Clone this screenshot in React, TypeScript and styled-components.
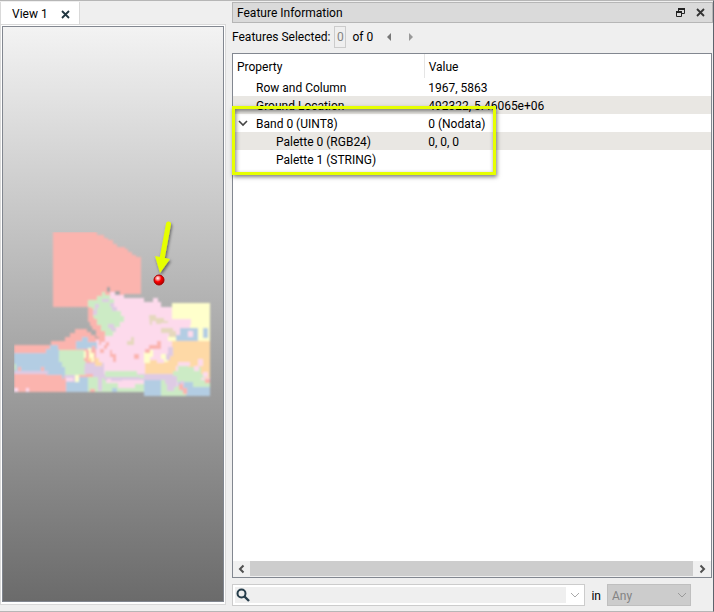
import React from "react";
import styled, { createGlobalStyle } from "styled-components";

const GlobalStyle = createGlobalStyle`
  *, *::before, *::after { box-sizing: border-box; }
  body { margin: 0; background: #efefef; }
  body, button, input, select {
    font-family: Roboto, "Open Sans", sans-serif;
    font-size: 12px;
    line-height: 18px;
    color: #000;
  }
  button { border: 0; padding: 0; background: transparent; }
`;

const Window = styled.main`
  display: grid;
  grid-template-columns: minmax(0, 226fr) minmax(0, 481fr);
  column-gap: 6px;
  height: 100vh;
  min-height: 420px;
  border-top: 1px solid #b6b6b6;
  border-bottom: 1px solid #b6b6b6;
  border-right: 1px solid #5d646d;
  background: #efefef;
`;

const ViewDock = styled.section`
  display: flex;
  flex-direction: column;
  padding: 1px 0 6px;
`;

const ViewTab = styled.div`
  display: flex;
  align-items: center;
  justify-content: space-between;
  width: 80px;
  height: 22px;
  padding: 2px 9px 0 11px;
  background: #fff;
  border-left: 1px solid #d9d9d9;
  border-right: 1px solid #d9d9d9;
`;

const IconButton = styled.button<{ $w?: number }>`
  display: flex;
  align-items: center;
  justify-content: center;
  width: ${(p) => p.$w ?? 12}px;
  height: 16px;
`;

const ViewPane = styled.div`
  display: flex;
  flex: 1;
  padding: 1px 1px 2px;
  background: #fff;
  border: 1px solid #d9d9d9;
`;

const Canvas = styled.div`
  position: relative;
  flex: 1;
  border: 1px solid #828790;
  background: linear-gradient(#f3f3f3, #6b6b6b);
  overflow: hidden;
`;

const MapLayer = styled.svg`
  position: absolute;
  left: 11px;
  top: 205px;
`;

const Marker = styled.svg`
  position: absolute;
  left: 147px;
  top: 190px;
`;

const InfoDock = styled.section`
  display: flex;
  flex-direction: column;
  min-width: 0;
  padding: 1px 0 5px;
`;

const TitleBar = styled.header`
  display: flex;
  align-items: center;
  gap: 8px;
  height: 21px;
  padding: 0 6px 0 4px;
  border: 1px solid #b6b6b6;
  background: #dadada;
`;

const Title = styled.h1`
  flex: 1;
  margin: 0;
  font-size: 12px;
  font-weight: 400;
`;

const SelectionBar = styled.div`
  display: flex;
  align-items: center;
  height: 30px;
  padding-bottom: 2px;
`;

const IndexInput = styled.input`
  width: 12px;
  height: 22px;
  margin: 0 6px 0 4px;
  padding: 0;
  border: 1px solid #ccc;
  background: #efefef;
  color: #838383;
  text-align: center;
`;

const Steppers = styled.div`
  display: flex;
  gap: 10px;
  margin-left: 10px;
`;

const TreeFrame = styled.div`
  position: relative;
  display: flex;
  flex: 1;
  flex-direction: column;
  justify-content: space-between;
  margin-right: 1px;
  border: 1px solid #828790;
  background: #fff;
`;

const Tree = styled.table`
  width: 100%;
  table-layout: fixed;
  border-collapse: collapse;
`;

const PropertyCol = styled.col`
  width: 40%;
`;

const HeadCell = styled.th`
  height: 24px;
  padding: 2px 4px 0;
  font-weight: 400;
  text-align: left;
  &:first-child { border-right: 1px solid #e5e5e5; }
`;

const Row = styled.tr<{ $shaded: boolean }>`
  background: ${(p) => (p.$shaded ? "#e9e7e3" : "#fff")};
`;

const Cell = styled.td<{ $depth?: number }>`
  height: 18px;
  padding: 2px 0 0 ${(p) => (p.$depth ? 3 + p.$depth * 20 : 4)}px;
  line-height: 16px;
  white-space: nowrap;
`;

const Expander = styled.button`
  display: inline-flex;
  align-items: center;
  width: 18px;
  height: 12px;
  margin-left: -18px;
  vertical-align: text-top;
`;

const Highlight = styled.div`
  position: absolute;
  left: -1px;
  top: 52px;
  width: 264px;
  height: 69px;
  border: 3px solid #e6ff00;
  box-shadow: 1px 2px 4px rgba(0, 0, 0, 0.5), inset 1px 2px 4px rgba(0, 0, 0, 0.5);
  pointer-events: none;
`;

const ScrollBar = styled.div`
  display: flex;
  height: 16px;
  padding-bottom: 1px;
  background: #f0f0f0;
`;

const ScrollThumb = styled.div`
  flex: 1;
  background: #cdcdcd;
`;

const FilterBar = styled.form`
  display: flex;
  align-items: center;
  gap: 6px;
  margin-top: 6px;
  padding-right: 22px;
`;

const SearchBox = styled.div`
  display: flex;
  flex: 1;
  align-items: center;
  height: 22px;
  padding: 2px 0 2px 2px;
  border: 1px solid #ccc;
  background: #fff;
`;

const SearchIcon = styled.span`
  display: flex;
  align-items: center;
  height: 16px;
  width: 18px;
  padding-left: 1px;
  background: #efefef;
`;

const SearchInput = styled.input`
  flex: 1;
  min-width: 0;
  height: 16px;
  padding: 0;
  border: 0;
  background: #efefef;
`;

const ScopeLabel = styled.label`
  padding: 2px 0 0;
`;

const ScopeField = styled.div`
  display: grid;
  align-items: center;
  width: 84px;
  > * { grid-area: 1 / 1; }
  > svg { justify-self: end; margin-right: 4px; pointer-events: none; }
`;

const ScopeSelect = styled.select`
  appearance: none;
  height: 22px;
  padding: 2px 4px 0;
  border: 1px solid #bfbfbf;
  border-radius: 0;
  background: #ccc;
  color: #838383;
  opacity: 1;
`;

const Cross = ({ size, color }: { size: number; color: string }) => (
  <svg width={size} height={size} viewBox="0 0 9 9" aria-hidden="true">
    <path d="M1 1L8 8M8 1L1 8" stroke={color} strokeWidth="1.8" />
  </svg>
);

const Chevron = ({ dir, color, thick }: { dir: "left" | "right" | "down"; color: string; thick: number }) => {
  const d = { left: "M6.5 1.5L3 5L6.5 8.5", right: "M3.5 1.5L7 5L3.5 8.5", down: "M1 3L5 7L9 3" }[dir];
  return (
    <svg width="10" height="10" viewBox="0 0 10 10" aria-hidden="true">
      <path d={d} fill="none" stroke={color} strokeWidth={thick} />
    </svg>
  );
};

const red = "#fbb4ae";
const blue = "#b3cde3";
const green = "#ccebc5";
const purple = "#decbe4";
const orange = "#fed9a6";
const yellow = "#ffffcc";
const brown = "#e5d8bd";
const pink = "#fddaec";

const regions: [string, string][] = [
  [red, "M53 232H97V235H104V238H108V240H113V244H117V247H125V249H128V252H132V255H136V257H141V294H124V312H88V307H53Z"],
  [red, "M14 345H51V341H65V337H70V333H75V329H87V332H91V335H95V338H99V334H96V330H93V326H90V320H88V306H124V392H14Z"],
  [pink, "M110 292H117V295H124V298H144V302H153V298H158V302H161V307H172V303H210V392H96V345H101V340H105V336H112Z"],
  [pink, "M105 296H120V336H108V345H99V340H96V366H104V392H144V340H112Z"],
  [green, "M91 300H97V296H102V292H105V295H110V299H114V307H117V311H121V316H124V322H120V327H116V332H113V336H105V331H101V325H97V319H93V308H88V300Z"],
  [purple, "M102 299H109V302H102ZM110 303H114V307H117V311H112V307H110ZM95 304H99V308H97V315H93V310H95ZM108 324H114V328H116V331H111V328H108Z"],
  [red, "M88 307H91V317H94V322H97V329H101V335H105V342H100V337H96V329H92V322H88Z"],
  [yellow, "M172 303H210V328H190V320H172ZM168 336H176V341H168Z"],
  [pink, "M172 319H191V325H188V328H183V332H176V335H172Z"],
  [orange, "M172 341H210V378H201V374H188V366H176V375H145V360H157V363H164V358H170V354H172Z"],
  [blue, "M180 328H198V341H176V335H180ZM203 328H208V338H203Z"],
  [yellow, "M198 328H203V338H208V328H210V341H198Z"],
  [yellow, "M144 352H149V350H153V357H150V363H144ZM161 354H166V357H168V362H164V359H161Z"],
  [brown, "M149 315H156V318H164V321H168V328H173V331H176V337H169V333H161V328H168V323H161V324H156V321H152V325H150ZM131 337H134V345H127V341H131Z"],
  [red, "M149 345H157V341H161V349H150V353H145V349H149ZM134 354H139V359H134Z"],
  [purple, "M168 347H173V356H170V360H166V354H168Z"],
  [blue, "M14 353H46V349H50V345H58V350H62V392H64V375H54V366H49V371H14Z"],
  [blue, "M53 349H59V392H53ZM76 341H82V337H88V342H97V349H76Z"],
  [blue, "M46 353H76V376H46Z"],
  [green, "M59 350H84V361H86V375H65V367H62V362H59ZM14 364H16V370H14Z"],
  [purple, "M14 371H48V374H14ZM85 363H104V374H84ZM65 375H76V383H65ZM104 374H176V381H104ZM93 374H108V379H93Z"],
  [red, "M14 375H62V379H66V392H14ZM18 367H21V371H18ZM41 367H44V371H41Z"],
  [blue, "M66 382H77V377H88V392H66Z"],
  [yellow, "M75 375H79V382H75ZM84 351H88V348H91V353H94V362H91V358H84Z"],
  [red, "M86 350H89V358H86ZM92 346H95V352H92ZM106 342H109V346H107V349H104V345H106ZM100 349H104V353H100ZM110 350H112V354H116V362H113V357H110Z"],
  [orange, "M88 358H92V361H88ZM95 358H99V362H102V366H95Z"],
  [green, "M105 371H137V375H149V378H105ZM88 377H98V383H102V378H106V383H118V388H131V384H144V392H88Z"],
  [purple, "M98 378H102V391H98ZM104 377H140V380H104ZM144 374H176V380H144Z"],
  [pink, "M107 379H111V383H107ZM122 380H144V383H135V388H122ZM66 378H73V381H66ZM14 388H18V392H14ZM26 388H29V392H26Z"],
  [green, "M173 371H178V366H188V367H201V374H205V378H201V380H210V387H193V382H173Z"],
  [blue, "M144 380H162V396H144ZM178 382H193V387H210V396H178Z"],
  [green, "M161 380H166V383H173V386H181V391H186V396H161Z"],
  [purple, "M165 376H177V387H174V391H167V384H165ZM180 381H184V386H180Z"],
  [pink, "M178 362H190V366H178ZM198 359H203V366H199V371H194V366H198ZM203 372H208V377H203ZM188 331H193V337H188Z"],
  [red, "M179 384H183V388H187V394H183V390H179ZM205 379H210V383H205ZM90 389H95V392H90Z"],
  [blue, "M112 388H117V392H112Z"],
];

const LandCoverMap = () => (
  <MapLayer width="200" height="168" viewBox="14 232 200 168" role="img" aria-label="Land cover raster">
    <defs>
      <filter id="resample" x="-5%" y="-5%" width="110%" height="110%">
        <feGaussianBlur stdDeviation="0.8" />
      </filter>
    </defs>
    <g filter="url(#resample)">
      {regions.map(([fill, d], i) => (
        <path key={i} d={d} fill={fill} />
      ))}
      <path d="M107 287h3v5h-3zM115 291h5v4h-5z" fill="#a4a4a4" />
    </g>
  </MapLayer>
);

const PickMarker = () => (
  <Marker width="32" height="80" viewBox="0 0 32 80" role="img" aria-label="Picked location">
    <defs>
      <radialGradient id="ball" cx="0.38" cy="0.32" r="0.65">
        <stop offset="0" stopColor="#fff" />
        <stop offset="0.3" stopColor="#ff8080" />
        <stop offset="0.55" stopColor="#f00" />
        <stop offset="1" stopColor="#b80000" />
      </radialGradient>
      <filter id="shade" x="-50%" y="-20%" width="200%" height="150%">
        <feDropShadow dx="1" dy="2" stdDeviation="1.5" floodOpacity="0.5" />
      </filter>
    </defs>
    <g filter="url(#shade)" fill="#e6ff00">
      <path d="M18.5 7L12 42" stroke="#e6ff00" strokeWidth="5" strokeLinecap="round" />
      <path d="M5 39L20 42L10 56Z" />
    </g>
    <circle cx="9" cy="63" r="5" fill="url(#ball)" stroke="#a80000" strokeWidth="1" />
  </Marker>
);

type Item = { name: string; value: string; depth: number; open?: boolean };

const items: Item[] = [
  { name: "Row and Column", value: "1967, 5863", depth: 1 },
  { name: "Ground Location", value: "492322, 5.46065e+06", depth: 1 },
  { name: "Band 0 (UINT8)", value: "0 (Nodata)", depth: 1, open: true },
  { name: "Palette 0 (RGB24)", value: "0, 0, 0", depth: 2 },
  { name: "Palette 1 (STRING)", value: "", depth: 2 },
];

export default function App() {
  return (
    <>
      <GlobalStyle />
      <Window>
        <ViewDock>
          <ViewTab>
            <span>View 1</span>
            <IconButton aria-label="Close view" $w={9}>
              <Cross size={9} color="#20353f" />
            </IconButton>
          </ViewTab>
          <ViewPane>
            <Canvas>
              <LandCoverMap />
              <PickMarker />
            </Canvas>
          </ViewPane>
        </ViewDock>

        <InfoDock>
          <TitleBar>
            <Title>Feature Information</Title>
            <IconButton aria-label="Float panel">
              <svg width="9" height="9" viewBox="0 0 9 9" aria-hidden="true">
                <path d="M2.5 3V1H8.5V5.5H6" fill="none" stroke="#222" />
                <path d="M2 1H9M0 4H6" stroke="#222" strokeWidth="2" />
                <path d="M0.5 4V8.5H5.5V4" fill="none" stroke="#222" />
              </svg>
            </IconButton>
            <IconButton aria-label="Close panel">
              <Cross size={9} color="#333" />
            </IconButton>
          </TitleBar>

          <SelectionBar>
            <label htmlFor="feature-index">Features Selected:</label>
            <IndexInput id="feature-index" defaultValue="0" disabled />
            <span>of 0</span>
            <Steppers>
              <IconButton aria-label="Previous feature">
                <svg width="6" height="8" viewBox="0 0 6 8" aria-hidden="true">
                  <path d="M5 0V8L1 4Z" fill="#777" />
                </svg>
              </IconButton>
              <IconButton aria-label="Next feature">
                <svg width="6" height="8" viewBox="0 0 6 8" aria-hidden="true">
                  <path d="M1 0V8L5 4Z" fill="#999" />
                </svg>
              </IconButton>
            </Steppers>
          </SelectionBar>

          <TreeFrame>
            <Tree>
              <colgroup>
                <PropertyCol />
                <col />
              </colgroup>
              <thead>
                <tr>
                  <HeadCell scope="col">Property</HeadCell>
                  <HeadCell scope="col">Value</HeadCell>
                </tr>
              </thead>
              <tbody>
                {items.map((item, i) => (
                  <Row key={item.name} $shaded={i % 2 === 1}>
                    <Cell $depth={item.depth}>
                      {item.open && (
                        <Expander aria-label="Collapse Band 0" aria-expanded="true">
                          <Chevron dir="down" color="#444" thick={1.6} />
                        </Expander>
                      )}
                      {item.name}
                    </Cell>
                    <Cell>{item.value}</Cell>
                  </Row>
                ))}
              </tbody>
            </Tree>
            <ScrollBar>
              <IconButton aria-label="Scroll left" $w={17}>
                <Chevron dir="left" color="#505050" thick={2} />
              </IconButton>
              <ScrollThumb />
              <IconButton aria-label="Scroll right" $w={18}>
                <Chevron dir="right" color="#505050" thick={2} />
              </IconButton>
            </ScrollBar>
            <Highlight />
          </TreeFrame>

          <FilterBar onSubmit={(e) => e.preventDefault()}>
            <SearchBox>
              <SearchIcon>
                <svg width="14" height="14" viewBox="0 0 14 14" aria-hidden="true">
                  <circle cx="5.5" cy="5.5" r="4" fill="none" stroke="#263d4a" strokeWidth="2" />
                  <path d="M8.5 8.5L13 13" stroke="#263d4a" strokeWidth="2.4" />
                </svg>
              </SearchIcon>
              <SearchInput aria-label="Search properties" />
              <IconButton type="button" aria-label="Search history" $w={18}>
                <Chevron dir="down" color="#aaa" thick={1} />
              </IconButton>
            </SearchBox>
            <ScopeLabel htmlFor="scope">in</ScopeLabel>
            <ScopeField>
              <ScopeSelect id="scope" disabled>
                <option>Any</option>
              </ScopeSelect>
              <Chevron dir="down" color="#9a9a9a" thick={1} />
            </ScopeField>
          </FilterBar>
        </InfoDock>
      </Window>
    </>
  );
}
